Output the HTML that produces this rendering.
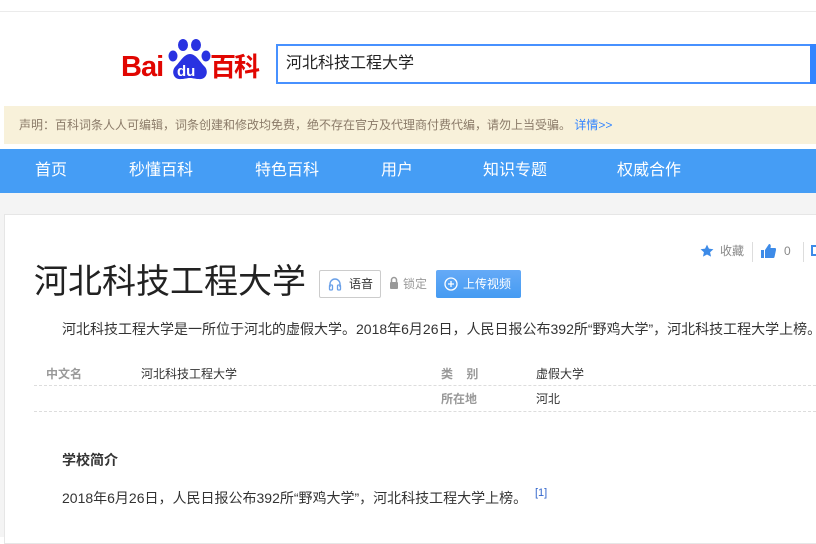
<!DOCTYPE html>
<html><head><meta charset="utf-8"><style>
*{margin:0;padding:0;box-sizing:border-box}
body{width:816px;height:537px;overflow:hidden;background:#fff;font-family:"Liberation Sans","Noto Sans CJK SC",sans-serif;position:relative;color:#333}
.a{position:absolute;white-space:nowrap}
</style></head><body>
<div class="a" style="left:0;top:11px;width:816px;height:1px;background:#ebebeb"></div>
<!-- logo -->
<div class="a" style="left:121px;top:51px;font:bold 29px 'Liberation Sans',sans-serif;color:#e10601;letter-spacing:-1px">Bai</div>
<svg class="a" style="left:166px;top:37px" width="48" height="46" viewBox="0 0 48 46">
<ellipse cx="17" cy="8" rx="5" ry="6" fill="#2932e1"/><ellipse cx="30" cy="8" rx="5" ry="6" fill="#2932e1"/>
<ellipse cx="7" cy="19" rx="4.5" ry="5.5" fill="#2932e1"/><ellipse cx="40" cy="19" rx="4.5" ry="5.5" fill="#2932e1"/>
<path d="M24 17c-6 0-10 8-15 13-4 5-1 13 6 12 4 0 6-1 9-1s5 1 9 1c7 1 10-7 6-12-5-5-9-13-15-13z" fill="#2932e1"/>
<text x="11" y="39" font-size="15" font-weight="bold" fill="#fff" font-family="Liberation Sans">du</text>
</svg>
<div class="a" style="left:210px;top:50px;font:bold 26px 'Noto Sans CJK SC',sans-serif;color:#e10601;letter-spacing:-2px;line-height:32px">百科</div>
<!-- search -->
<div class="a" style="left:276px;top:44px;width:545px;height:40px;border:2px solid #4791ff;border-right:none"></div>
<div class="a" style="left:810px;top:44px;width:6px;height:40px;background:#3385ff"></div>
<div class="a" style="left:286px;top:53px;font-size:16px;color:#222;line-height:22px">河北科技工程大学</div>
<!-- notice -->
<div class="a" style="left:4px;top:106px;width:812px;height:38px;background:#f8f1da"></div>
<div class="a" style="left:19px;top:116px;font-size:12px;color:#8a7a68;line-height:18px">声明：百科词条人人可编辑，词条创建和修改均免费，绝不存在官方及代理商付费代编，请勿上当受骗。 <span style="color:#3385ff">详情&gt;&gt;</span></div>
<!-- nav -->
<div class="a" style="left:0;top:149px;width:816px;height:44px;background:#459df5"></div>
<div class="a" style="top:160px;font-size:16px;color:#fff;line-height:22px;left:35px">首页</div>
<div class="a" style="top:160px;font-size:16px;color:#fff;line-height:22px;left:129px">秒懂百科</div>
<div class="a" style="top:160px;font-size:16px;color:#fff;line-height:22px;left:255px">特色百科</div>
<div class="a" style="top:160px;font-size:16px;color:#fff;line-height:22px;left:381px">用户</div>
<div class="a" style="top:160px;font-size:16px;color:#fff;line-height:22px;left:483px">知识专题</div>
<div class="a" style="top:160px;font-size:16px;color:#fff;line-height:22px;left:617px">权威合作</div>
<!-- gray bg + card -->
<div class="a" style="left:0;top:193px;width:816px;height:344px;background:#f4f4f4"></div>
<div class="a" style="left:4px;top:214px;width:820px;height:330px;background:#fff;border:1px solid #e6e6e6"></div>
<!-- toolbar -->
<svg class="a" style="left:700px;top:244px" width="14" height="14" viewBox="0 0 24 24"><path d="M12 1l3.3 7 7.7.9-5.7 5.2 1.6 7.6L12 17.9 5.1 21.7l1.6-7.6L1 8.9 8.7 8z" fill="#3d8be8"/></svg>
<div class="a" style="left:720px;top:243px;font-size:12px;color:#888;line-height:16px">收藏</div>
<div class="a" style="left:752px;top:242px;width:1px;height:20px;background:#ddd"></div>
<svg class="a" style="left:761px;top:244px" width="15" height="14" viewBox="0 0 15 14"><rect x="0" y="6" width="3" height="8" fill="#3d8be8"/><path d="M4 6l4-6c2 0 2 2 1.5 4H14c1 0 1 1 1 2l-1.5 7c-.3 1-1 1-1.5 1H4z" fill="#3d8be8"/></svg>
<div class="a" style="left:784px;top:243px;font-size:12px;color:#888;line-height:16px">0</div>
<div class="a" style="left:803px;top:242px;width:1px;height:20px;background:#ddd"></div>
<div class="a" style="left:811px;top:245px;width:8px;height:11px;border:2px solid #3d8be8"></div>
<!-- title -->
<div class="a" style="left:34px;top:260px;font-size:34px;color:#222;line-height:44px">河北科技工程大学</div>
<div class="a" style="left:319px;top:270px;width:62px;height:28px;border:1px solid #ccc;border-radius:2px;background:#fff"></div>
<svg class="a" style="left:328px;top:277px" width="14" height="14" viewBox="0 0 14 14"><path d="M2 10V7a5 5 0 0 1 10 0v3" fill="none" stroke="#6aa0e8" stroke-width="1.4"/><rect x="1.5" y="8" width="3" height="5" rx="1" fill="none" stroke="#6aa0e8" stroke-width="1.3"/><rect x="9.5" y="8" width="3" height="5" rx="1" fill="none" stroke="#6aa0e8" stroke-width="1.3"/></svg>
<div class="a" style="left:349px;top:276px;font-size:12px;color:#333;line-height:16px">语音</div>
<svg class="a" style="left:389px;top:276px" width="10" height="13" viewBox="0 0 10 13"><path d="M2.5 6V4a2.5 2.5 0 0 1 5 0v2" fill="none" stroke="#999" stroke-width="1.5"/><rect x="1" y="6" width="8" height="7" rx="1" fill="#999"/></svg>
<div class="a" style="left:403px;top:276px;font-size:12px;color:#999;line-height:16px">锁定</div>
<div class="a" style="left:436px;top:270px;width:85px;height:28px;border-radius:2px;background:linear-gradient(#65aaf7,#459bf2)"></div>
<svg class="a" style="left:444px;top:277px" width="14" height="14" viewBox="0 0 14 14"><circle cx="7" cy="7" r="6" fill="none" stroke="#fff" stroke-width="1.3"/><path d="M7 4v6M4 7h6" stroke="#fff" stroke-width="1.3"/></svg>
<div class="a" style="left:463px;top:276px;font-size:12px;color:#fff;line-height:16px">上传视频</div>
<!-- summary -->
<div class="a" style="left:62px;top:319px;font-size:14px;color:#333;line-height:20px">河北科技工程大学是一所位于河北的虚假大学。2018年6月26日，人民日报公布392所“野鸡大学”，河北科技工程大学上榜。</div>
<!-- info table -->
<div class="a" style="left:46px;top:366px;font-size:12px;color:#999;font-weight:bold;line-height:16px">中文名</div>
<div class="a" style="left:141px;top:366px;font-size:12px;color:#333;line-height:16px">河北科技工程大学</div>
<div class="a" style="left:441px;top:366px;font-size:12px;color:#999;font-weight:bold;line-height:16px">类&nbsp;&nbsp;&nbsp;&nbsp;别</div>
<div class="a" style="left:536px;top:366px;font-size:12px;color:#333;line-height:16px">虚假大学</div>
<div class="a" style="left:34px;top:385px;width:782px;border-top:1px dashed #ddd"></div>
<div class="a" style="left:441px;top:391px;font-size:12px;color:#999;font-weight:bold;line-height:16px">所在地</div>
<div class="a" style="left:536px;top:391px;font-size:12px;color:#333;line-height:16px">河北</div>
<div class="a" style="left:34px;top:411px;width:782px;border-top:1px dashed #ddd"></div>
<!-- section -->
<div class="a" style="left:62px;top:451px;font-size:14px;font-weight:bold;color:#333;line-height:18px">学校简介</div>
<div class="a" style="left:62px;top:488px;font-size:14px;color:#333;line-height:20px">2018年6月26日，人民日报公布392所“野鸡大学”，河北科技工程大学上榜。</div>
<div class="a" style="left:535px;top:486px;font-size:11px;color:#3366cc;line-height:14px">[1]</div>
</body></html>
